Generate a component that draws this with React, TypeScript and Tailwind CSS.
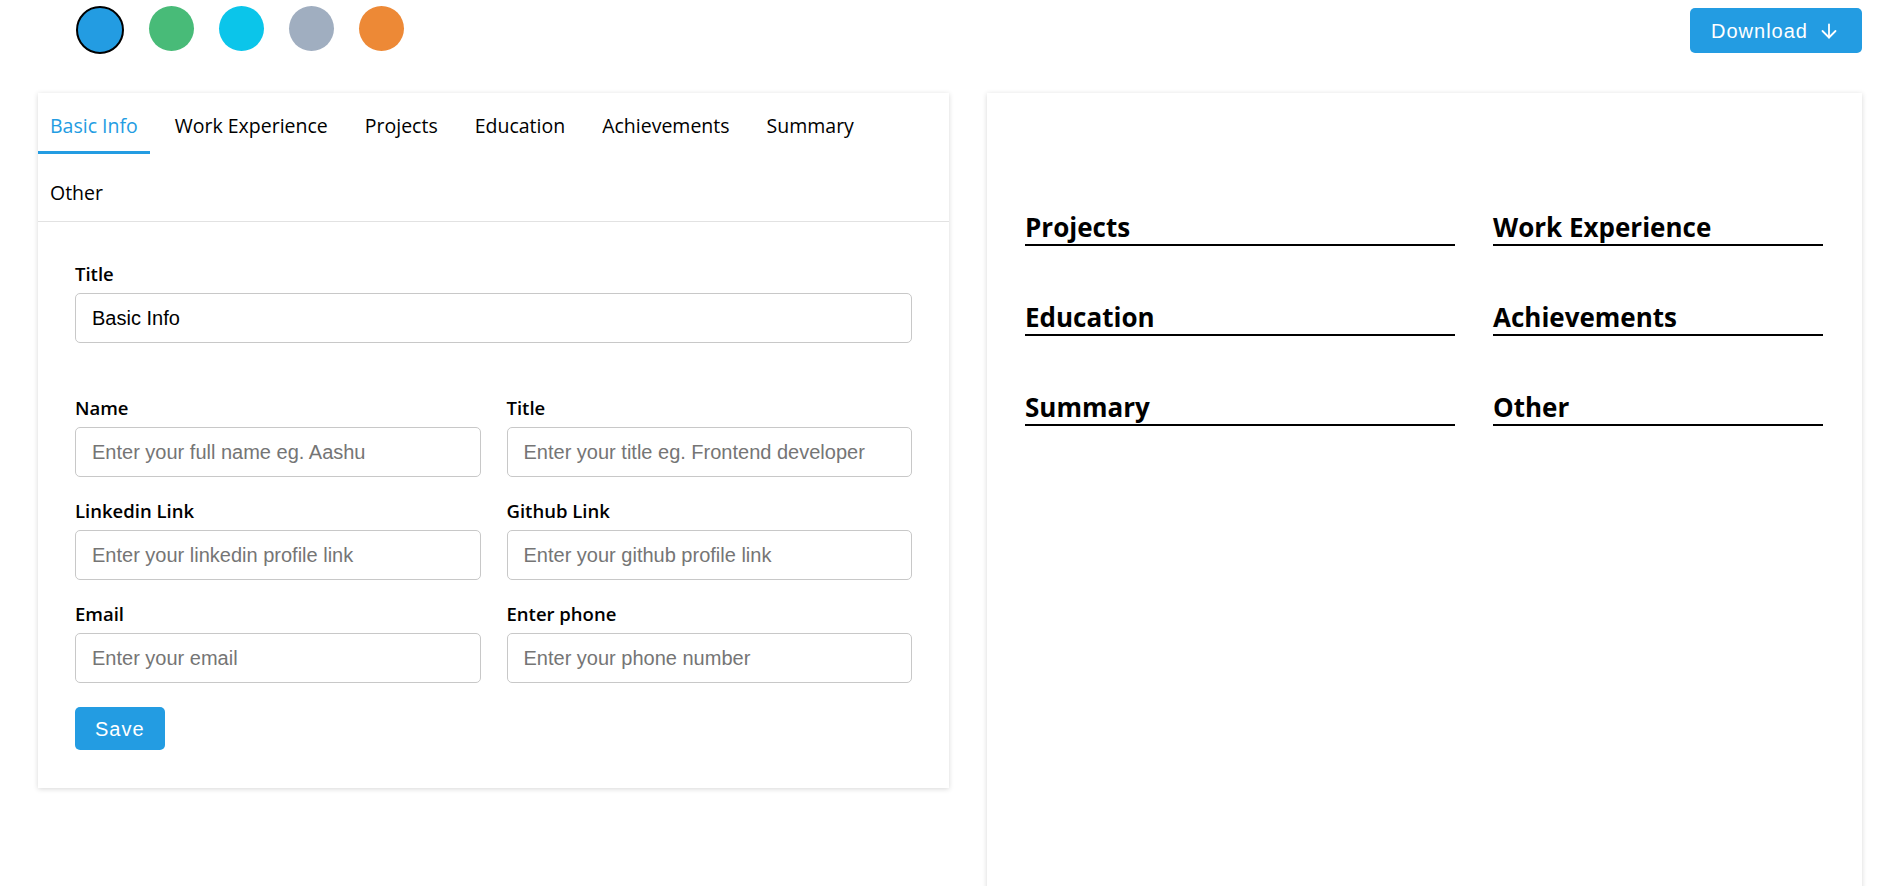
import { useState } from "react";

const colors = ["#239ce2", "#48bb78", "#0bc5ea", "#a0aec0", "#ed8936"];

const tabs = [
	"Basic Info",
	"Work Experience",
	"Projects",
	"Education",
	"Achievements",
	"Summary",
	"Other",
];

const DownArrow = () => (
	<svg width="18" height="16" viewBox="0 0 18 16" fill="none" stroke="currentColor" strokeWidth="1.8" strokeLinecap="round" strokeLinejoin="round">
		<path d="M9 1.5v13" />
		<path d="M2.5 8l6.5 6.5 6.5-6.5" />
	</svg>
);

const Field = ({ label, placeholder, value }: { label: string; placeholder?: string; value?: string }) => (
	<div className="flex flex-col gap-[7px]">
		<label className="text-[18.5px] font-semibold leading-[24px] text-black">{label}</label>
		<input
			type="text"
			placeholder={placeholder}
			defaultValue={value}
			className="h-[50px] w-full rounded-[5px] border border-[#c8c8c8] px-[16px] font-['Liberation_Sans',Arial,sans-serif] text-[20px] text-black outline-none placeholder:text-[#757575]"
		/>
	</div>
);

const App = () => {
	const [color, setColor] = useState(colors[0]);
	const [active, setActive] = useState("Basic Info");

	return (
		<div className="min-h-screen bg-white font-['Open_Sans',sans-serif]">
			{/* TOP BAR */}
			<div className="flex h-[93px] items-start justify-between pl-[76px] pr-[15px] pt-[6px]">
				<div className="flex items-start gap-[25px]">
					{colors.map((c) => (
						<span
							key={c}
							onClick={() => setColor(c)}
							className={
								c === color
									? "block h-[48px] w-[48px] cursor-pointer rounded-full border-2 border-black"
									: "block h-[45px] w-[45px] cursor-pointer rounded-full"
							}
							style={{ backgroundColor: c }}
						/>
					))}
				</div>
				<button className="mt-[2px] flex h-[45px] items-center gap-[12px] rounded-[5px] bg-[#239ce2] pl-[21px] pr-[24px] font-['Liberation_Sans',Arial,sans-serif] text-[20px] tracking-[1px] text-white">
					Download
					<DownArrow />
				</button>
			</div>

			{/* MAIN */}
			<div className="flex items-start gap-[38px] pl-[38px] pr-[15px]">
				{/* EDITOR */}
				<div className="w-[911px] bg-white shadow-[0_1px_5px_rgba(0,0,0,0.16)]">
					<div className="flex flex-wrap gap-x-[13px] gap-y-[14px] border-b border-[#e2e2e2] pr-[70px] pt-[8px]">
						{tabs.map((t) => (
							<div
								key={t}
								onClick={() => setActive(t)}
								className={
									t === active
										? "cursor-pointer border-b-[3px] border-[#239ce2] px-[12px] py-[12px] text-[19.5px] font-medium leading-[26px] text-[#239ce2]"
										: "cursor-pointer border-b-[3px] border-transparent px-[12px] py-[12px] text-[19.5px] font-medium leading-[26px] text-black"
								}
							>
								{t}
							</div>
						))}
					</div>
					<div className="px-[37px] pb-[38px] pt-[40px]">
						<Field label="Title" value="Basic Info" />
						<div className="mt-[53px] grid grid-cols-2 gap-x-[26px] gap-y-[22px]">
							<Field label="Name" placeholder="Enter your full name eg. Aashu" />
							<Field label="Title" placeholder="Enter your title eg. Frontend developer" />
							<Field label="Linkedin Link" placeholder="Enter your linkedin profile link" />
							<Field label="Github Link" placeholder="Enter your github profile link" />
							<Field label="Email" placeholder="Enter your email" />
							<Field label="Enter phone" placeholder="Enter your phone number" />
						</div>
						<button className="mt-[24px] h-[43px] rounded-[5px] bg-[#239ce2] px-[20px] font-['Liberation_Sans',Arial,sans-serif] text-[20px] tracking-[1px] text-white">
							Save
						</button>
					</div>
				</div>

				{/* PREVIEW */}
				<div className="h-[1000px] w-[875px] bg-white px-[38px] pt-[119px] shadow-[0_1px_5px_rgba(0,0,0,0.16)]">
					<div className="grid grid-cols-[430px_330px] gap-x-[38px]">
						<div className="flex flex-col gap-[56px]">
							{["Projects", "Education", "Summary"].map((h) => (
								<div key={h} className="border-b-2 border-black pb-[1px] text-[26px] font-bold leading-[31px] text-black">
									{h}
								</div>
							))}
						</div>
						<div className="flex flex-col gap-[56px]">
							{["Work Experience", "Achievements", "Other"].map((h) => (
								<div key={h} className="border-b-2 border-black pb-[1px] text-[26px] font-bold leading-[31px] text-black">
									{h}
								</div>
							))}
						</div>
					</div>
				</div>
			</div>
		</div>
	);
};

export default App;
